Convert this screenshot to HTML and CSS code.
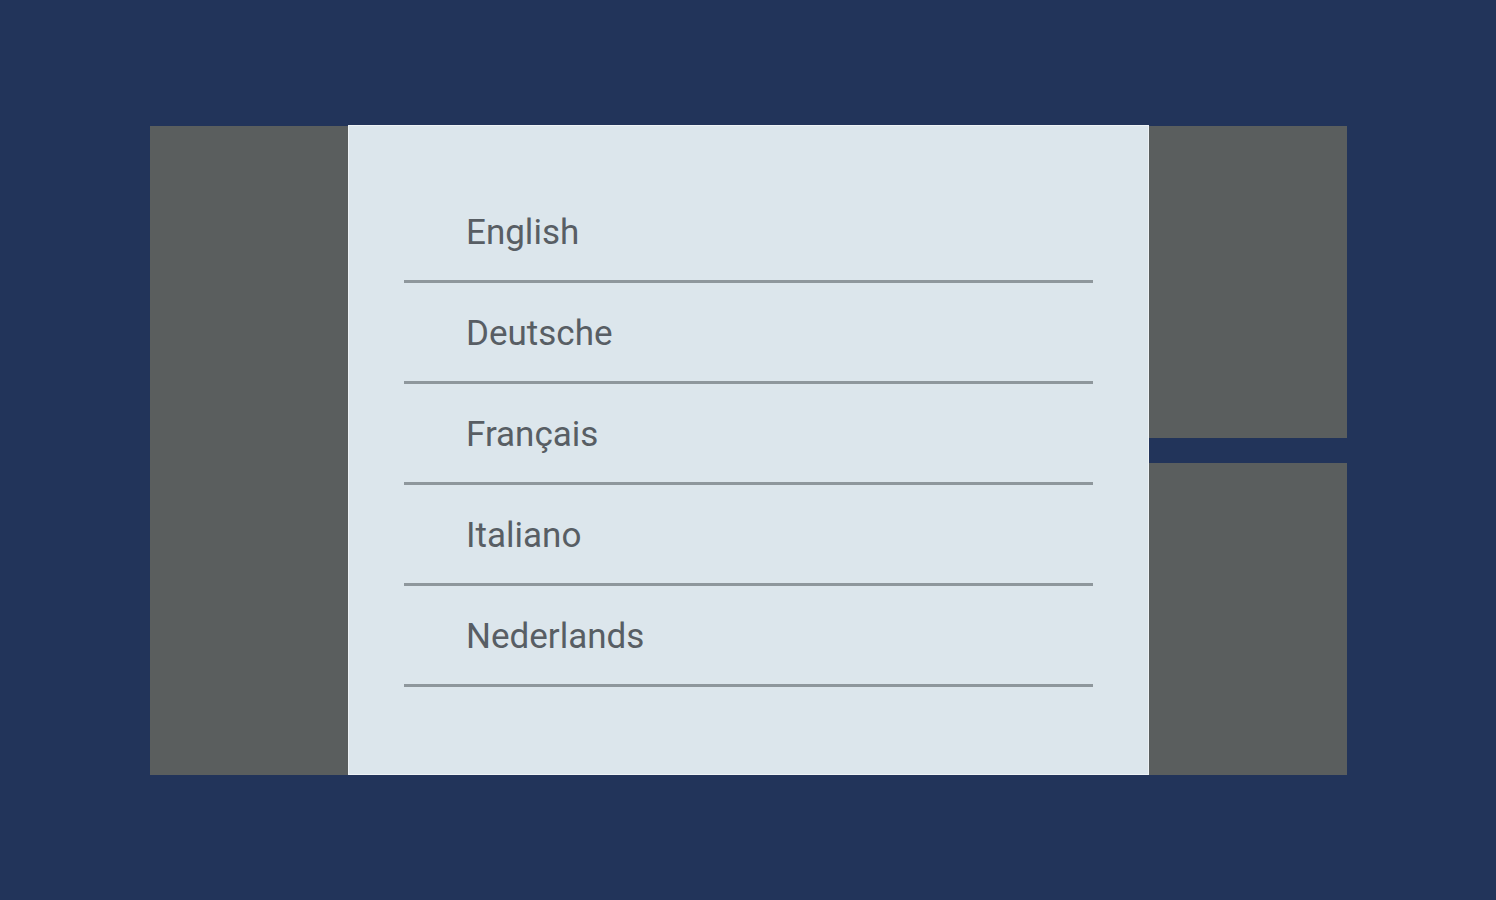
FILE: index.html
```html
<!DOCTYPE html>
<html lang="en">
<head>
<meta charset="utf-8">
<title>Language</title>
<link rel="stylesheet" href="styles.css">
</head>
<body>
<div class="stage">
  <div class="side side-left"></div>
  <div class="panel">
    <ul class="lang-list">
      <li class="lang-item">English</li>
      <li class="lang-item">Deutsche</li>
      <li class="lang-item">Français</li>
      <li class="lang-item">Italiano</li>
      <li class="lang-item">Nederlands</li>
    </ul>
  </div>
  <div class="side-right">
    <div class="side side-top"></div>
    <div class="side side-bottom"></div>
  </div>
</div>
</body>
</html>
```
FILE: styles.css
```css
html, body {
  margin: 0;
  padding: 0;
}
body {
  background: #22345a;
  width: 1496px;
  height: 900px;
  overflow: hidden;
  font-family: Roboto, "Liberation Sans", Arial, sans-serif;
}
.stage {
  display: flex;
  margin: 126px 0 0 150px;
  width: 1197px;
  height: 649px;
}
.side {
  background: #5a5e5e;
}
.side-left {
  width: 198px;
  flex: none;
}
.panel {
  width: 801px;
  flex: none;
  height: 650px;
  margin-top: -1px;
  box-sizing: border-box;
  background: #dce6ec;
  border: 1px solid #edf2f5;
  padding: 56px 55px 0 55px;
}
.lang-list {
  list-style: none;
  margin: 0;
  padding: 0;
}
.lang-item {
  height: 67px;
  padding: 31px 0 0 62px;
  border-bottom: 3px solid #8e979c;
  font-size: 35px;
  line-height: 40px;
  color: #585e64;
}
.side-right {
  width: 198px;
  flex: none;
  display: flex;
  flex-direction: column;
  gap: 25px;
}
.side-top {
  height: 312px;
}
.side-bottom {
  flex: 1;
}
```
